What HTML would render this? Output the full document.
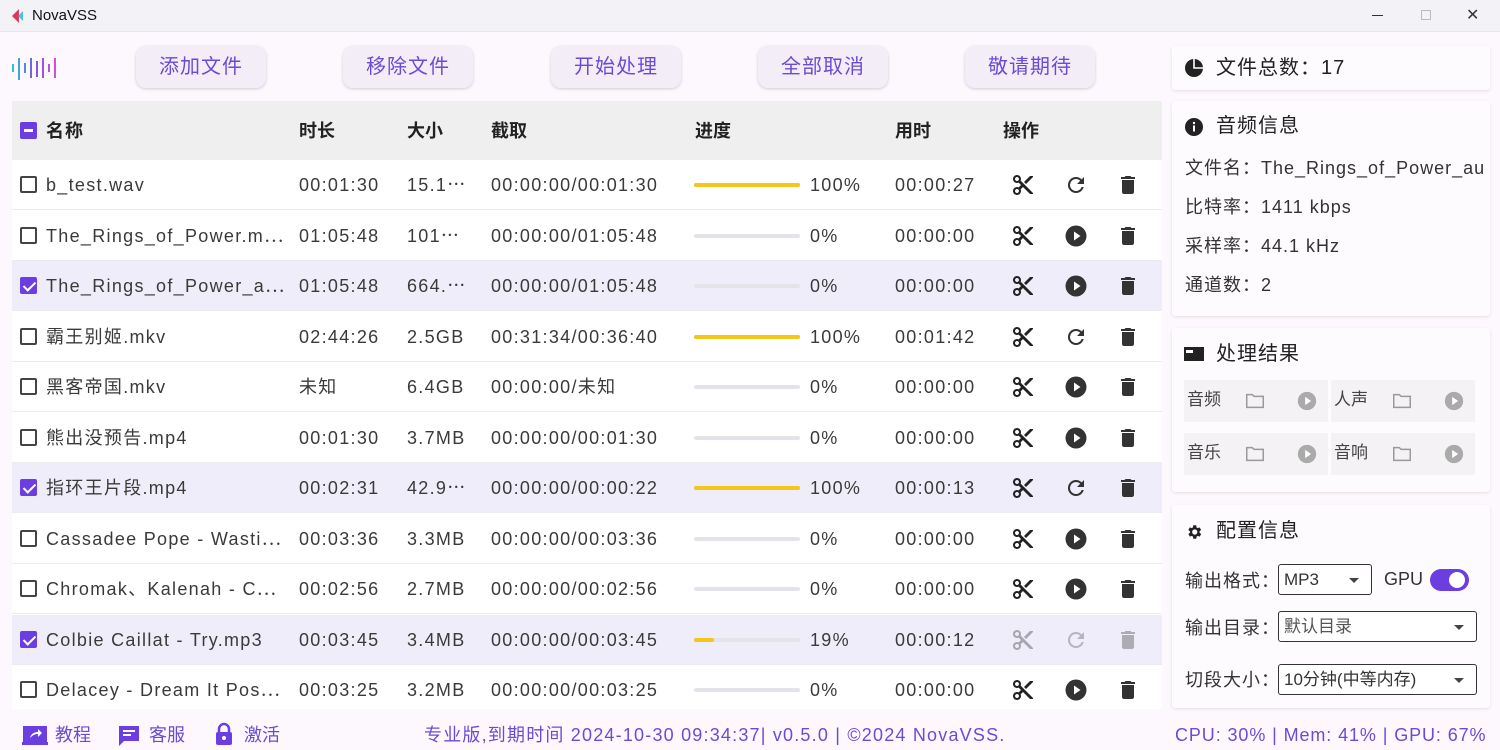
<!DOCTYPE html>
<html><head><meta charset="utf-8"><style>
*{box-sizing:border-box;margin:0;padding:0}
body{width:1500px;height:750px;overflow:hidden;background:#fdf8fd;font-family:"Liberation Sans","Noto Sans CJK SC",sans-serif;color:#333;position:relative}
.abs{position:absolute}
.title{left:0;top:0;width:1500px;height:32px;background:#f3f2f7;border-bottom:1px solid #e8e6ec}
.btn{position:absolute;top:46px;width:130px;height:42px;border-radius:10px;background:#f3edf8;box-shadow:0 1px 3px rgba(0,0,0,.18);color:#6a4bd6;font-size:20px;line-height:42px;text-align:center;letter-spacing:1px}
.table{left:12px;top:101px;width:1150px;height:608px;background:#fff;overflow:hidden}
.hdr{position:absolute;left:0;top:0;width:1150px;height:59px;background:#efefef;font-weight:bold;font-size:18px;color:#222}
.hdr span,.row span{position:absolute;white-space:nowrap;line-height:22px;height:22px}
.hdr span{top:19px}
.row{position:absolute;left:0;width:1150px;height:50px;border-bottom:1px solid #ececf0;font-size:18px;color:#3a3a3a;background:#fff;letter-spacing:1.3px}
.row.sel{background:#f0edfa}
.row span{top:14px}
.cb{position:absolute;left:8px;top:16px;width:17px;height:17px;border:2px solid #444;border-radius:2px}
.cb.on{background:#6a3ee0;border-color:#6a3ee0}
.row .cb.on:after{content:"";position:absolute;left:4px;top:0px;width:5px;height:10px;border:solid #fff;border-width:0 2px 2px 0;transform:rotate(45deg)}
.c1{left:34px}.c2{left:287px}.c3{left:395px}.c4{left:479px}.c6{left:798px}.c7{left:883px}
.bar{position:absolute;left:682px;top:23px;width:106px;height:4px;border-radius:2px;background:#e5e3ea}
.bar i{display:block;height:4px;border-radius:2px;background:#f5c518}
.ic{position:absolute;top:13px;width:24px;height:24px}
.i1{left:999px}.i2{left:1052px}.i3{left:1104px}
.card{position:absolute;left:1172px;width:318px;background:#fefbfe;box-shadow:0 1px 3px rgba(0,0,0,.1);border-radius:3px}
.card .t{position:absolute;left:44px;font-size:20px;color:#222;line-height:24px;letter-spacing:1px}
.info{position:absolute;left:13px;font-size:18px;color:#333;white-space:nowrap;line-height:22px;letter-spacing:1px}
.cell{position:absolute;width:144px;height:42px;background:#f4f2f4;font-size:17px;color:#444}
.cell span{position:absolute;left:3px;top:10px;line-height:20px}
.sel2{position:absolute;border:1.5px solid #333;border-radius:3px;height:31px;font-size:17px;line-height:20px;padding:5px 0 0 5px;background:#fff}
.sel2:after{content:"";position:absolute;right:12px;top:13px;border:5px solid transparent;border-top:5px solid #444}
.foot{position:absolute;top:724px;font-size:18px;line-height:22px;color:#6a4bd6;white-space:nowrap}
</style></head><body>
<svg width="0" height="0" style="position:absolute"><defs>
<symbol id="sc" viewBox="0 0 24 24"><path fill="#222" d="M9.64 7.64c.23-.5.36-1.05.36-1.64 0-2.21-1.79-4-4-4S2 3.790 2 6s1.790 4 4 4c.59 0 1.14-.13 1.64-.36L10 12l-2.36 2.36C7.14 14.13 6.59 14 6 14c-2.21 0-4 1.79-4 4s1.79 4 4 4 4-1.79 4-4c0-.59-.13-1.14-.36-1.64L12 14l7 7h3v-1L9.640 7.640zM6 8c-1.1 0-2-.89-2-2s.9-2 2-2 2 .89 2 2-.9 2-2 2zm0 12c-1.1 0-2-.89-2-2s.9-2 2-2 2 .89 2 2-.9 2-2 2zM19 3l-6 6 2 2 7-7V3h-3z"/></symbol>
<symbol id="rf" viewBox="0 0 24 24"><path fill="#333" d="M17.65 6.35A7.96 7.96 0 0 0 12 4a8 8 0 1 0 7.73 10h-2.08A6 6 0 1 1 12 6c1.66 0 3.14.69 4.22 1.78L13 11h7V4l-2.35 2.35z"/></symbol>
<symbol id="pl" viewBox="0 0 24 24"><circle cx="12" cy="12" r="10.5" fill="#333"/><path fill="#fff" d="M10 7.5v9l6.5-4.5z"/></symbol>
<symbol id="tr" viewBox="0 0 24 24"><path fill="#333" d="M6 19c0 1.1.9 2 2 2h8c1.1 0 2-.9 2-2V7H6v12zM19 4h-3.5l-1-1h-5l-1 1H5v2h14V4z"/></symbol>
<symbol id="fd" viewBox="0 0 24 24"><path fill="none" stroke="#999" stroke-width="1.6" d="M3 5h6l2 2h10v12H3z"/></symbol>
<symbol id="gp" viewBox="0 0 24 24"><circle cx="12" cy="12" r="10" fill="#aaa"/><path fill="#fff" d="M10 7.5v9l6.5-4.5z"/></symbol>
</defs></svg>

<div class="abs title"></div>
<svg class="abs" style="left:9px;top:8px" width="16" height="16" viewBox="0 0 16 16"><path d="M10 1L3 8l7 7z" fill="#e0365a"/><path d="M14 3L9 8l5 5z" fill="#4cc0d8"/></svg>
<div class="abs" style="left:32px;top:7px;font-size:15px;color:#111">NovaVSS</div>
<div class="abs" style="left:1372px;top:15px;width:11px;height:1px;background:#333"></div>
<div class="abs" style="left:1421px;top:10px;width:10px;height:10px;border:1px solid #bbb"></div>
<div class="abs" style="left:1466px;top:5px;font-size:16px;color:#333">✕</div>

<svg class="abs" style="left:12px;top:55px" width="48" height="26" viewBox="0 0 48 26">
<defs><linearGradient id="lg" x1="0" x2="1"><stop offset="0" stop-color="#2bc0e0"/><stop offset=".5" stop-color="#7a5ad8"/><stop offset="1" stop-color="#d050d8"/></linearGradient></defs>
<g stroke="url(#lg)" stroke-width="2"><path d="M1 9v8M7 3v22M13 8v10M19 3v20M25 6v16M31 3v20M37 9v8M43 3v20"/></g></svg>
<div class="btn" style="left:136px">添加文件</div>
<div class="btn" style="left:343px">移除文件</div>
<div class="btn" style="left:551px">开始处理</div>
<div class="btn" style="left:758px">全部取消</div>
<div class="btn" style="left:965px">敬请期待</div>

<div class="abs table">
<div class="hdr"><div class="cb on" style="top:21px"></div><div class="abs" style="left:12px;top:28px;width:9px;height:2.5px;background:#fff"></div>
<span class="c1" style="letter-spacing:1px">名称</span><span class="c2">时长</span><span class="c3">大小</span><span class="c4">截取</span><span style="left:683px">进度</span><span class="c7">用时</span><span style="left:991px">操作</span></div>

<div class="row" style="top:59px"><div class="cb"></div><span class="c1">b_test.wav</span><span class="c2">00:01:30</span><span class="c3">15.1⋯</span><span class="c4">00:00:00/00:01:30</span><div class="bar"><i style="width:100%"></i></div><span class="c6">100%</span><span class="c7">00:00:27</span><svg class="ic i1"><use href="#sc"/></svg><svg class="ic i2"><use href="#rf"/></svg><svg class="ic i3"><use href="#tr"/></svg></div>
<div class="row" style="top:110px"><div class="cb"></div><span class="c1">The_Rings_of_Power.m⋯</span><span class="c2">01:05:48</span><span class="c3">101⋯</span><span class="c4">00:00:00/01:05:48</span><div class="bar"></div><span class="c6">0%</span><span class="c7">00:00:00</span><svg class="ic i1"><use href="#sc"/></svg><svg class="ic i2"><use href="#pl"/></svg><svg class="ic i3"><use href="#tr"/></svg></div>
<div class="row sel" style="top:160px"><div class="cb on"></div><span class="c1">The_Rings_of_Power_a⋯</span><span class="c2">01:05:48</span><span class="c3">664.⋯</span><span class="c4">00:00:00/01:05:48</span><div class="bar"></div><span class="c6">0%</span><span class="c7">00:00:00</span><svg class="ic i1"><use href="#sc"/></svg><svg class="ic i2"><use href="#pl"/></svg><svg class="ic i3"><use href="#tr"/></svg></div>
<div class="row" style="top:211px"><div class="cb"></div><span class="c1">霸王别姬.mkv</span><span class="c2">02:44:26</span><span class="c3">2.5GB</span><span class="c4">00:31:34/00:36:40</span><div class="bar"><i style="width:100%"></i></div><span class="c6">100%</span><span class="c7">00:01:42</span><svg class="ic i1"><use href="#sc"/></svg><svg class="ic i2"><use href="#rf"/></svg><svg class="ic i3"><use href="#tr"/></svg></div>
<div class="row" style="top:261px"><div class="cb"></div><span class="c1">黑客帝国.mkv</span><span class="c2">未知</span><span class="c3">6.4GB</span><span class="c4">00:00:00/未知</span><div class="bar"></div><span class="c6">0%</span><span class="c7">00:00:00</span><svg class="ic i1"><use href="#sc"/></svg><svg class="ic i2"><use href="#pl"/></svg><svg class="ic i3"><use href="#tr"/></svg></div>
<div class="row" style="top:312px"><div class="cb"></div><span class="c1">熊出没预告.mp4</span><span class="c2">00:01:30</span><span class="c3">3.7MB</span><span class="c4">00:00:00/00:01:30</span><div class="bar"></div><span class="c6">0%</span><span class="c7">00:00:00</span><svg class="ic i1"><use href="#sc"/></svg><svg class="ic i2"><use href="#pl"/></svg><svg class="ic i3"><use href="#tr"/></svg></div>
<div class="row sel" style="top:362px"><div class="cb on"></div><span class="c1">指环王片段.mp4</span><span class="c2">00:02:31</span><span class="c3">42.9⋯</span><span class="c4">00:00:00/00:00:22</span><div class="bar"><i style="width:100%"></i></div><span class="c6">100%</span><span class="c7">00:00:13</span><svg class="ic i1"><use href="#sc"/></svg><svg class="ic i2"><use href="#rf"/></svg><svg class="ic i3"><use href="#tr"/></svg></div>
<div class="row" style="top:413px"><div class="cb"></div><span class="c1">Cassadee Pope - Wasti⋯</span><span class="c2">00:03:36</span><span class="c3">3.3MB</span><span class="c4">00:00:00/00:03:36</span><div class="bar"></div><span class="c6">0%</span><span class="c7">00:00:00</span><svg class="ic i1"><use href="#sc"/></svg><svg class="ic i2"><use href="#pl"/></svg><svg class="ic i3"><use href="#tr"/></svg></div>
<div class="row" style="top:463px"><div class="cb"></div><span class="c1">Chromak、Kalenah - C⋯</span><span class="c2">00:02:56</span><span class="c3">2.7MB</span><span class="c4">00:00:00/00:02:56</span><div class="bar"></div><span class="c6">0%</span><span class="c7">00:00:00</span><svg class="ic i1"><use href="#sc"/></svg><svg class="ic i2"><use href="#pl"/></svg><svg class="ic i3"><use href="#tr"/></svg></div>
<div class="row sel" style="top:514px"><div class="cb on"></div><span class="c1">Colbie Caillat - Try.mp3</span><span class="c2">00:03:45</span><span class="c3">3.4MB</span><span class="c4">00:00:00/00:03:45</span><div class="bar"><i style="width:19%"></i></div><span class="c6">19%</span><span class="c7">00:00:12</span><svg class="ic i1" style="opacity:.35"><use href="#sc"/></svg><svg class="ic i2" style="opacity:.3"><use href="#rf"/></svg><svg class="ic i3" style="opacity:.35"><use href="#tr"/></svg></div>
<div class="row" style="top:564px"><div class="cb"></div><span class="c1">Delacey - Dream It Pos⋯</span><span class="c2">00:03:25</span><span class="c3">3.2MB</span><span class="c4">00:00:00/00:03:25</span><div class="bar"></div><span class="c6">0%</span><span class="c7">00:00:00</span><svg class="ic i1"><use href="#sc"/></svg><svg class="ic i2"><use href="#pl"/></svg><svg class="ic i3"><use href="#tr"/></svg></div>
</div>

<div class="card" style="top:46px;height:44px">
<svg class="abs" style="left:12px;top:12px" width="20" height="20" viewBox="0 0 20 20"><circle cx="10" cy="10" r="9" fill="#222"/><path d="M10 1v9h9" stroke="#fff" stroke-width="1.6" fill="none"/></svg>
<div class="t" style="top:10px">文件总数：17</div></div>

<div class="card" style="top:101px;height:215px">
<svg class="abs" style="left:12px;top:16px" width="20" height="20" viewBox="0 0 20 20"><circle cx="10" cy="10" r="9" fill="#222"/><rect x="9" y="8.5" width="2" height="6" fill="#fff"/><circle cx="10" cy="6" r="1.2" fill="#fff"/></svg>
<div class="t" style="top:13px">音频信息</div>
<div class="info" style="top:56px">文件名：The_Rings_of_Power_au</div>
<div class="info" style="top:95px">比特率：1411 kbps</div>
<div class="info" style="top:134px">采样率：44.1 kHz</div>
<div class="info" style="top:173px">通道数：2</div></div>

<div class="card" style="top:328px;height:164px">
<svg class="abs" style="left:12px;top:17px" width="20" height="18" viewBox="0 0 20 18"><rect x="0" y="2" width="20" height="14" fill="#222"/><rect x="2" y="5" width="7" height="3" fill="#fff"/></svg>
<div class="t" style="top:14px">处理结果</div>
<div class="cell" style="left:12px;top:52px"><span>音频</span><svg class="abs" style="left:60px;top:10px" width="22" height="22"><use href="#fd"/></svg><svg class="abs" style="left:112px;top:10px" width="22" height="22"><use href="#gp"/></svg></div>
<div class="cell" style="left:159px;top:52px"><span>人声</span><svg class="abs" style="left:60px;top:10px" width="22" height="22"><use href="#fd"/></svg><svg class="abs" style="left:112px;top:10px" width="22" height="22"><use href="#gp"/></svg></div>
<div class="cell" style="left:12px;top:105px"><span>音乐</span><svg class="abs" style="left:60px;top:10px" width="22" height="22"><use href="#fd"/></svg><svg class="abs" style="left:112px;top:10px" width="22" height="22"><use href="#gp"/></svg></div>
<div class="cell" style="left:159px;top:105px"><span>音响</span><svg class="abs" style="left:60px;top:10px" width="22" height="22"><use href="#fd"/></svg><svg class="abs" style="left:112px;top:10px" width="22" height="22"><use href="#gp"/></svg></div>
</div>

<div class="card" style="top:505px;height:203px">
<svg class="abs" style="left:13px;top:18px" width="18" height="18" viewBox="0 0 24 24"><path fill="#222" d="M19.4 13a7.5 7.5 0 0 0 0-2l2.1-1.6-2-3.5-2.5 1a7.6 7.6 0 0 0-1.7-1L15 3h-4l-.4 2.9a7.6 7.6 0 0 0-1.7 1l-2.5-1-2 3.5L6.6 11a7.5 7.5 0 0 0 0 2l-2.1 1.6 2 3.5 2.5-1a7.6 7.6 0 0 0 1.7 1L11 21h4l.4-2.9a7.6 7.6 0 0 0 1.7-1l2.5 1 2-3.5zM13 15.5a3.5 3.5 0 1 1 0-7 3.5 3.5 0 0 1 0 7z"/></svg>
<div class="t" style="top:14px">配置信息</div>
<div class="info" style="top:65px">输出格式：</div>
<div class="sel2" style="left:106px;top:59px;width:94px">MP3</div>
<div class="abs" style="left:212px;top:64px;font-size:18px;color:#333">GPU</div>
<div class="abs" style="left:258px;top:64px;width:39px;height:22px;border-radius:11px;background:#6a3ee0"></div>
<div class="abs" style="left:277px;top:67px;width:16px;height:16px;border-radius:8px;background:#fff"></div>
<div class="info" style="top:112px">输出目录：</div>
<div class="sel2" style="left:106px;top:106px;width:199px;color:#555">默认目录</div>
<div class="info" style="top:164px">切段大小：</div>
<div class="sel2" style="left:106px;top:159px;width:199px">10分钟(中等内存)</div>
</div>

<svg class="abs" style="left:22px;top:724px" width="26" height="22" viewBox="0 0 26 22"><rect x="1" y="2" width="24" height="16" fill="#6a3ee0"/><rect x="0" y="18" width="26" height="3" fill="#6a3ee0"/><path d="M8 14c1-4 4-6 8-6V5l4 4-4 4v-3c-3 0-5 1-8 4z" fill="#fff"/></svg>
<div class="foot" style="left:55px">教程</div>
<svg class="abs" style="left:118px;top:725px" width="22" height="22" viewBox="0 0 22 22"><path d="M1 1h20v15H6l-5 5z" fill="#6a3ee0"/><path d="M5 6h12M5 10h8" stroke="#fff" stroke-width="2"/></svg>
<div class="foot" style="left:149px">客服</div>
<svg class="abs" style="left:214px;top:722px" width="20" height="24" viewBox="0 0 20 24"><path d="M5 10V7a5 5 0 0 1 10 0v3" stroke="#6a3ee0" stroke-width="2.5" fill="none"/><rect x="2" y="10" width="16" height="13" rx="2" fill="#6a3ee0"/><circle cx="10" cy="16" r="2" fill="#fff"/></svg>
<div class="foot" style="left:244px">激活</div>
<div class="foot" style="left:424px;letter-spacing:1.2px">专业版,到期时间 2024-10-30 09:34:37| v0.5.0 | ©2024 NovaVSS.</div>
<div class="foot" style="left:1175px;letter-spacing:0.9px">CPU: 30% | Mem: 41% | GPU: 67%</div>
</body></html>
